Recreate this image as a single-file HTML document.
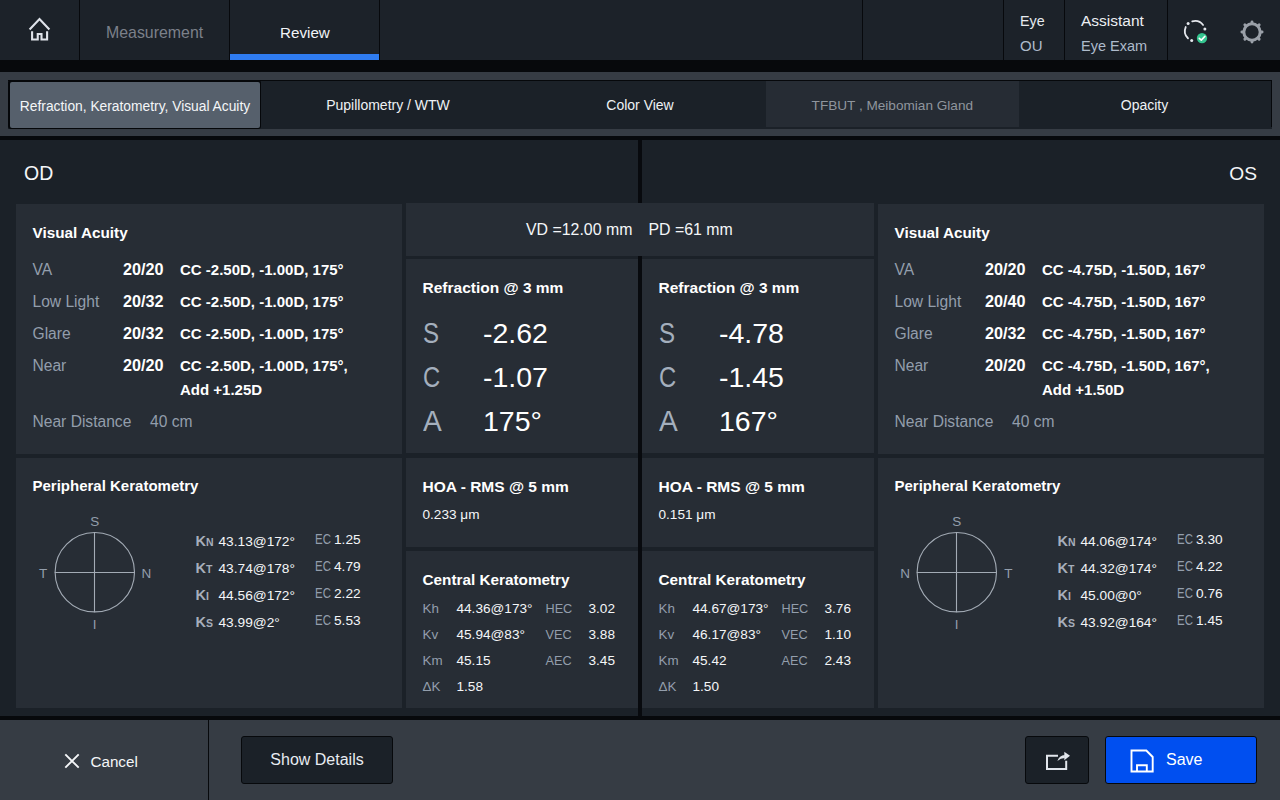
<!DOCTYPE html>
<html><head><meta charset="utf-8"><style>
html,body{margin:0;padding:0;width:1280px;height:800px;overflow:hidden;background:#1b2128;}
body>div{position:absolute;}
.t{position:absolute;white-space:nowrap;font-family:'Liberation Sans', sans-serif;}
</style></head><body>
<div style="left:0px;top:0px;width:1280px;height:60px;background:#1c2229;"></div>
<div style="left:79px;top:0px;width:1px;height:60px;background:#07090c;"></div>
<div style="left:229px;top:0px;width:1px;height:60px;background:#07090c;"></div>
<div style="left:379px;top:0px;width:1px;height:60px;background:#07090c;"></div>
<div style="left:862px;top:0px;width:1px;height:60px;background:#07090c;"></div>
<div style="left:1003px;top:0px;width:1px;height:60px;background:#07090c;"></div>
<div style="left:1064px;top:0px;width:1px;height:60px;background:#07090c;"></div>
<div style="left:1167px;top:0px;width:1px;height:60px;background:#07090c;"></div>
<div style="left:230px;top:54px;width:149px;height:6px;background:#2f7cf0;"></div>
<svg style="position:absolute;left:0;top:0" width="80" height="60" viewBox="0 0 80 60"><g fill="none" stroke="#dfe3ea" stroke-width="2.1" stroke-linejoin="miter" stroke-linecap="butt"><path d="M29.6 29.4 L39.5 19.1 L49.4 29.4"/><path d="M32.1 31.2 V39.55 H37.75 V34 H41.5 V39.55 H47.1 V31.2"/></g></svg>
<div class="t" style="left:106px;top:25.00px;font-size:15.9px;line-height:15.9px;color:#7b8089;font-weight:400;">Measurement</div>
<div class="t" style="left:280px;top:25.00px;font-size:15.2px;line-height:15.2px;color:#f2f4f7;font-weight:400;">Review</div>
<div class="t" style="left:1020px;top:14.00px;font-size:14.3px;line-height:14.3px;color:#e6eaef;font-weight:400;">Eye</div>
<div class="t" style="left:1020px;top:38.00px;font-size:15px;line-height:15px;color:#aebbcb;font-weight:400;">OU</div>
<div class="t" style="left:1081px;top:13.00px;font-size:15.5px;line-height:15.5px;color:#eceff3;font-weight:400;">Assistant</div>
<div class="t" style="left:1081px;top:39.00px;font-size:14.5px;line-height:14.5px;color:#aebbcb;font-weight:400;">Eye Exam</div>
<svg style="position:absolute;left:1170px;top:0" width="60" height="60" viewBox="1170 0 60 60"><g fill="none" stroke="#e4e7ec" stroke-width="1.8" stroke-linecap="round"><path d="M1192.22 21.29 A10.1 10.1 0 0 1 1203.07 24.92"/><path d="M1187.98 38.27 A10.1 10.1 0 0 1 1185.70 27.05"/></g><circle cx="1188.11" cy="23.61" r="1.5" fill="#e4e7ec"/><circle cx="1204.88" cy="28.90" r="1.5" fill="#e4e7ec"/><circle cx="1191.71" cy="40.55" r="1.5" fill="#e4e7ec"/><circle cx="1202" cy="38.1" r="5.2" fill="#34c58f"/><path d="M1199.3 38.3 L1201.3 40.1 L1204.9 36.4" fill="none" stroke="#ffffff" stroke-width="1.6" stroke-linecap="round" stroke-linejoin="round"/></svg>
<svg style="position:absolute;left:1220px;top:0" width="60" height="60" viewBox="1220 0 60 60"><circle cx="1252.0" cy="32.0" r="8.2" fill="none" stroke="#9aa0a8" stroke-width="3.0"/><path d="M1260.60 32.00 L1262.10 32.00 M1258.08 38.08 L1259.14 39.14 M1252.00 40.60 L1252.00 42.10 M1245.92 38.08 L1244.86 39.14 M1243.40 32.00 L1241.90 32.00 M1245.92 25.92 L1244.86 24.86 M1252.00 23.40 L1252.00 21.90 M1258.08 25.92 L1259.14 24.86" stroke="#9aa0a8" stroke-width="2.9" stroke-linecap="round"/></svg>
<div style="left:0px;top:60px;width:1280px;height:12px;background:#07090c;"></div>
<div style="left:0px;top:72px;width:1280px;height:64px;background:#363c44;"></div>
<div style="left:8px;top:80px;width:1264px;height:49px;background:#1b2128;"></div>
<div style="left:8px;top:80px;width:1264px;height:1px;background:#06080b;"></div>
<div style="left:1271px;top:80px;width:1px;height:47px;background:#06080b;"></div>
<div style="left:766px;top:81px;width:253px;height:46px;background:#262c34;"></div>
<div style="left:8px;top:80px;width:253px;height:49px;background:#05070a;border-radius:3px;"></div>
<div style="left:10px;top:82px;width:250px;height:46px;background:#56606c;border-radius:2px;"></div>
<div class="t" style="left:10.00px;top:100.00px;width:250px;text-align:center;font-size:13.8px;line-height:13.8px;color:#f4f6f8;font-weight:400;">Refraction, Keratometry, Visual Acuity</div>
<div class="t" style="left:263.00px;top:98.00px;width:250px;text-align:center;font-size:14px;line-height:14px;color:#eef1f4;font-weight:400;">Pupillometry / WTW</div>
<div class="t" style="left:515.00px;top:98.00px;width:250px;text-align:center;font-size:14px;line-height:14px;color:#eef1f4;font-weight:400;">Color View</div>
<div class="t" style="left:767.30px;top:99.00px;width:250px;text-align:center;font-size:13.6px;line-height:13.6px;color:#8f959d;font-weight:400;">TFBUT , Meibomian Gland</div>
<div class="t" style="left:1019.50px;top:98.00px;width:250px;text-align:center;font-size:14px;line-height:14px;color:#eef1f4;font-weight:400;">Opacity</div>
<div style="left:0px;top:136px;width:1280px;height:4px;background:#07090c;"></div>
<div style="left:0px;top:140px;width:1280px;height:576px;background:#1b2128;"></div>
<div style="left:638px;top:140px;width:4px;height:576px;background:#080a0e;"></div>
<div class="t" style="left:24px;top:164.00px;font-size:19.5px;line-height:19.5px;color:#f4f6f8;font-weight:400;">OD</div>
<div class="t" style="left:1157.00px;top:164.00px;width:100px;text-align:right;font-size:19.2px;line-height:19.2px;color:#f4f6f8;font-weight:400;">OS</div>
<div style="left:16px;top:204px;width:386px;height:250px;background:#272d35;"></div>
<div class="t" style="left:32.5px;top:225.00px;font-size:15.3px;line-height:15.3px;color:#ffffff;font-weight:700;">Visual Acuity</div>
<div class="t" style="left:32.5px;top:262.00px;font-size:15.6px;line-height:15.6px;color:#939eac;font-weight:400;">VA</div>
<div class="t" style="left:123px;top:261.00px;font-size:16.2px;line-height:16.2px;color:#ffffff;font-weight:700;">20/20</div>
<div class="t" style="left:180px;top:262.00px;font-size:15px;line-height:15px;color:#ffffff;font-weight:700;">CC -2.50D, -1.00D, 175°</div>
<div class="t" style="left:32.5px;top:294.00px;font-size:15.6px;line-height:15.6px;color:#939eac;font-weight:400;">Low Light</div>
<div class="t" style="left:123px;top:293.00px;font-size:16.2px;line-height:16.2px;color:#ffffff;font-weight:700;">20/32</div>
<div class="t" style="left:180px;top:294.00px;font-size:15px;line-height:15px;color:#ffffff;font-weight:700;">CC -2.50D, -1.00D, 175°</div>
<div class="t" style="left:32.5px;top:326.00px;font-size:15.6px;line-height:15.6px;color:#939eac;font-weight:400;">Glare</div>
<div class="t" style="left:123px;top:325.00px;font-size:16.2px;line-height:16.2px;color:#ffffff;font-weight:700;">20/32</div>
<div class="t" style="left:180px;top:326.00px;font-size:15px;line-height:15px;color:#ffffff;font-weight:700;">CC -2.50D, -1.00D, 175°</div>
<div class="t" style="left:32.5px;top:358.00px;font-size:15.6px;line-height:15.6px;color:#939eac;font-weight:400;">Near</div>
<div class="t" style="left:123px;top:357.00px;font-size:16.2px;line-height:16.2px;color:#ffffff;font-weight:700;">20/20</div>
<div class="t" style="left:180px;top:358.00px;font-size:15px;line-height:15px;color:#ffffff;font-weight:700;">CC -2.50D, -1.00D, 175°,</div>
<div class="t" style="left:180px;top:382.00px;font-size:15px;line-height:15px;color:#ffffff;font-weight:700;">Add +1.25D</div>
<div class="t" style="left:32.5px;top:414.00px;font-size:15.6px;line-height:15.6px;color:#939eac;font-weight:400;">Near Distance</div>
<div class="t" style="left:150px;top:414.00px;font-size:15.6px;line-height:15.6px;color:#939eac;font-weight:400;">40 cm</div>
<div style="left:878px;top:204px;width:386px;height:250px;background:#272d35;"></div>
<div class="t" style="left:894.5px;top:225.00px;font-size:15.3px;line-height:15.3px;color:#ffffff;font-weight:700;">Visual Acuity</div>
<div class="t" style="left:894.5px;top:262.00px;font-size:15.6px;line-height:15.6px;color:#939eac;font-weight:400;">VA</div>
<div class="t" style="left:985px;top:261.00px;font-size:16.2px;line-height:16.2px;color:#ffffff;font-weight:700;">20/20</div>
<div class="t" style="left:1042px;top:262.00px;font-size:15px;line-height:15px;color:#ffffff;font-weight:700;">CC -4.75D, -1.50D, 167°</div>
<div class="t" style="left:894.5px;top:294.00px;font-size:15.6px;line-height:15.6px;color:#939eac;font-weight:400;">Low Light</div>
<div class="t" style="left:985px;top:293.00px;font-size:16.2px;line-height:16.2px;color:#ffffff;font-weight:700;">20/40</div>
<div class="t" style="left:1042px;top:294.00px;font-size:15px;line-height:15px;color:#ffffff;font-weight:700;">CC -4.75D, -1.50D, 167°</div>
<div class="t" style="left:894.5px;top:326.00px;font-size:15.6px;line-height:15.6px;color:#939eac;font-weight:400;">Glare</div>
<div class="t" style="left:985px;top:325.00px;font-size:16.2px;line-height:16.2px;color:#ffffff;font-weight:700;">20/32</div>
<div class="t" style="left:1042px;top:326.00px;font-size:15px;line-height:15px;color:#ffffff;font-weight:700;">CC -4.75D, -1.50D, 167°</div>
<div class="t" style="left:894.5px;top:358.00px;font-size:15.6px;line-height:15.6px;color:#939eac;font-weight:400;">Near</div>
<div class="t" style="left:985px;top:357.00px;font-size:16.2px;line-height:16.2px;color:#ffffff;font-weight:700;">20/20</div>
<div class="t" style="left:1042px;top:358.00px;font-size:15px;line-height:15px;color:#ffffff;font-weight:700;">CC -4.75D, -1.50D, 167°,</div>
<div class="t" style="left:1042px;top:382.00px;font-size:15px;line-height:15px;color:#ffffff;font-weight:700;">Add +1.50D</div>
<div class="t" style="left:894.5px;top:414.00px;font-size:15.6px;line-height:15.6px;color:#939eac;font-weight:400;">Near Distance</div>
<div class="t" style="left:1012px;top:414.00px;font-size:15.6px;line-height:15.6px;color:#939eac;font-weight:400;">40 cm</div>
<div style="left:406px;top:203px;width:468px;height:53px;background:#272d35;"></div>
<div class="t" style="left:526px;top:222.00px;font-size:15.9px;line-height:15.9px;color:#f4f6f8;font-weight:400;">VD =12.00 mm</div>
<div class="t" style="left:648.5px;top:222.00px;font-size:15.9px;line-height:15.9px;color:#f4f6f8;font-weight:400;">PD =61 mm</div>
<div style="left:406px;top:259px;width:232px;height:194px;background:#272d35;"></div>
<div class="t" style="left:422.5px;top:280.00px;font-size:15.5px;line-height:15.5px;color:#ffffff;font-weight:700;">Refraction @ 3 mm</div>
<div class="t" style="left:423px;top:319.00px;font-size:29px;line-height:29px;color:#a4afbd;font-weight:400;transform:scaleX(0.83);transform-origin:0 0;">S</div>
<div class="t" style="left:483px;top:319.00px;font-size:28.5px;line-height:28.5px;color:#ffffff;font-weight:400;">-2.62</div>
<div class="t" style="left:423px;top:363.00px;font-size:29px;line-height:29px;color:#a4afbd;font-weight:400;transform:scaleX(0.82);transform-origin:0 0;">C</div>
<div class="t" style="left:483px;top:363.00px;font-size:28.5px;line-height:28.5px;color:#ffffff;font-weight:400;">-1.07</div>
<div class="t" style="left:423px;top:407.00px;font-size:29px;line-height:29px;color:#a4afbd;font-weight:400;transform:scaleX(0.97);transform-origin:0 0;">A</div>
<div class="t" style="left:483px;top:407.00px;font-size:28.5px;line-height:28.5px;color:#ffffff;font-weight:400;">175°</div>
<div style="left:642px;top:259px;width:232px;height:194px;background:#272d35;"></div>
<div class="t" style="left:658.5px;top:280.00px;font-size:15.5px;line-height:15.5px;color:#ffffff;font-weight:700;">Refraction @ 3 mm</div>
<div class="t" style="left:659px;top:319.00px;font-size:29px;line-height:29px;color:#a4afbd;font-weight:400;transform:scaleX(0.83);transform-origin:0 0;">S</div>
<div class="t" style="left:719px;top:319.00px;font-size:28.5px;line-height:28.5px;color:#ffffff;font-weight:400;">-4.78</div>
<div class="t" style="left:659px;top:363.00px;font-size:29px;line-height:29px;color:#a4afbd;font-weight:400;transform:scaleX(0.82);transform-origin:0 0;">C</div>
<div class="t" style="left:719px;top:363.00px;font-size:28.5px;line-height:28.5px;color:#ffffff;font-weight:400;">-1.45</div>
<div class="t" style="left:659px;top:407.00px;font-size:29px;line-height:29px;color:#a4afbd;font-weight:400;transform:scaleX(0.97);transform-origin:0 0;">A</div>
<div class="t" style="left:719px;top:407.00px;font-size:28.5px;line-height:28.5px;color:#ffffff;font-weight:400;">167°</div>
<div style="left:406px;top:458px;width:232px;height:89px;background:#272d35;"></div>
<div class="t" style="left:422.5px;top:479.00px;font-size:15.5px;line-height:15.5px;color:#ffffff;font-weight:700;">HOA - RMS @ 5 mm</div>
<div class="t" style="left:422.5px;top:508.00px;font-size:13.6px;line-height:13.6px;color:#f4f6f8;font-weight:400;">0.233 μm</div>
<div style="left:642px;top:458px;width:232px;height:89px;background:#272d35;"></div>
<div class="t" style="left:658.5px;top:479.00px;font-size:15.5px;line-height:15.5px;color:#ffffff;font-weight:700;">HOA - RMS @ 5 mm</div>
<div class="t" style="left:658.5px;top:508.00px;font-size:13.6px;line-height:13.6px;color:#f4f6f8;font-weight:400;">0.151 μm</div>
<div style="left:406px;top:551px;width:232px;height:157px;background:#272d35;"></div>
<div class="t" style="left:422.5px;top:572.00px;font-size:15.3px;line-height:15.3px;color:#ffffff;font-weight:700;">Central Keratometry</div>
<div class="t" style="left:422.5px;top:602.00px;font-size:13.4px;line-height:13.4px;color:#939eac;font-weight:400;">Kh</div>
<div class="t" style="left:456.5px;top:602.00px;font-size:13.6px;line-height:13.6px;color:#f4f6f8;font-weight:400;">44.36@173°</div>
<div class="t" style="left:545.5px;top:603.00px;font-size:12.7px;line-height:12.7px;color:#939eac;font-weight:400;">HEC</div>
<div class="t" style="left:588.5px;top:602.00px;font-size:13.6px;line-height:13.6px;color:#f4f6f8;font-weight:400;">3.02</div>
<div class="t" style="left:422.5px;top:628.00px;font-size:13.4px;line-height:13.4px;color:#939eac;font-weight:400;">Kv</div>
<div class="t" style="left:456.5px;top:628.00px;font-size:13.6px;line-height:13.6px;color:#f4f6f8;font-weight:400;">45.94@83°</div>
<div class="t" style="left:545.5px;top:629.00px;font-size:12.7px;line-height:12.7px;color:#939eac;font-weight:400;">VEC</div>
<div class="t" style="left:588.5px;top:628.00px;font-size:13.6px;line-height:13.6px;color:#f4f6f8;font-weight:400;">3.88</div>
<div class="t" style="left:422.5px;top:654.00px;font-size:13.4px;line-height:13.4px;color:#939eac;font-weight:400;">Km</div>
<div class="t" style="left:456.5px;top:654.00px;font-size:13.6px;line-height:13.6px;color:#f4f6f8;font-weight:400;">45.15</div>
<div class="t" style="left:545.5px;top:655.00px;font-size:12.7px;line-height:12.7px;color:#939eac;font-weight:400;">AEC</div>
<div class="t" style="left:588.5px;top:654.00px;font-size:13.6px;line-height:13.6px;color:#f4f6f8;font-weight:400;">3.45</div>
<div class="t" style="left:422.5px;top:680.00px;font-size:13.4px;line-height:13.4px;color:#939eac;font-weight:400;">ΔK</div>
<div class="t" style="left:456.5px;top:680.00px;font-size:13.6px;line-height:13.6px;color:#f4f6f8;font-weight:400;">1.58</div>
<div style="left:642px;top:551px;width:232px;height:157px;background:#272d35;"></div>
<div class="t" style="left:658.5px;top:572.00px;font-size:15.3px;line-height:15.3px;color:#ffffff;font-weight:700;">Central Keratometry</div>
<div class="t" style="left:658.5px;top:602.00px;font-size:13.4px;line-height:13.4px;color:#939eac;font-weight:400;">Kh</div>
<div class="t" style="left:692.5px;top:602.00px;font-size:13.6px;line-height:13.6px;color:#f4f6f8;font-weight:400;">44.67@173°</div>
<div class="t" style="left:781.5px;top:603.00px;font-size:12.7px;line-height:12.7px;color:#939eac;font-weight:400;">HEC</div>
<div class="t" style="left:824.5px;top:602.00px;font-size:13.6px;line-height:13.6px;color:#f4f6f8;font-weight:400;">3.76</div>
<div class="t" style="left:658.5px;top:628.00px;font-size:13.4px;line-height:13.4px;color:#939eac;font-weight:400;">Kv</div>
<div class="t" style="left:692.5px;top:628.00px;font-size:13.6px;line-height:13.6px;color:#f4f6f8;font-weight:400;">46.17@83°</div>
<div class="t" style="left:781.5px;top:629.00px;font-size:12.7px;line-height:12.7px;color:#939eac;font-weight:400;">VEC</div>
<div class="t" style="left:824.5px;top:628.00px;font-size:13.6px;line-height:13.6px;color:#f4f6f8;font-weight:400;">1.10</div>
<div class="t" style="left:658.5px;top:654.00px;font-size:13.4px;line-height:13.4px;color:#939eac;font-weight:400;">Km</div>
<div class="t" style="left:692.5px;top:654.00px;font-size:13.6px;line-height:13.6px;color:#f4f6f8;font-weight:400;">45.42</div>
<div class="t" style="left:781.5px;top:655.00px;font-size:12.7px;line-height:12.7px;color:#939eac;font-weight:400;">AEC</div>
<div class="t" style="left:824.5px;top:654.00px;font-size:13.6px;line-height:13.6px;color:#f4f6f8;font-weight:400;">2.43</div>
<div class="t" style="left:658.5px;top:680.00px;font-size:13.4px;line-height:13.4px;color:#939eac;font-weight:400;">ΔK</div>
<div class="t" style="left:692.5px;top:680.00px;font-size:13.6px;line-height:13.6px;color:#f4f6f8;font-weight:400;">1.50</div>
<div style="left:16px;top:458px;width:386px;height:250px;background:#272d35;"></div>
<div class="t" style="left:32.5px;top:478.00px;font-size:15px;line-height:15px;color:#ffffff;font-weight:700;">Peripheral Keratometry</div>
<svg style="position:absolute;left:16px;top:458px" width="200" height="250" viewBox="16 458 200 250"><g fill="none" stroke="#a3abb5" stroke-width="1.1"><circle cx="94.8" cy="572.2" r="39.7"/><path d="M54.8 572.5 H134.2 M94.5 532.8 V612.2"/></g></svg>
<div class="t" style="left:74.70px;top:515.00px;width:40px;text-align:center;font-size:13.5px;line-height:13.5px;color:#939eac;font-weight:400;">S</div>
<div class="t" style="left:74.70px;top:618.00px;width:40px;text-align:center;font-size:13.5px;line-height:13.5px;color:#939eac;font-weight:400;">I</div>
<div class="t" style="left:23.10px;top:567.00px;width:40px;text-align:center;font-size:13.5px;line-height:13.5px;color:#939eac;font-weight:400;">T</div>
<div class="t" style="left:126.30px;top:567.00px;width:40px;text-align:center;font-size:13.5px;line-height:13.5px;color:#939eac;font-weight:400;">N</div>
<div class="t" style="left:195.5px;top:534.00px;font-size:14.5px;line-height:14.5px;color:#a6aebb;font-weight:700;">K<span style="font-size:10.5px">N</span></div>
<div class="t" style="left:218.5px;top:535.00px;font-size:13.7px;line-height:13.7px;color:#f4f6f8;font-weight:400;">43.13@172°</div>
<div class="t" style="left:314.5px;top:532.00px;font-size:14.3px;line-height:14.3px;color:#939eac;font-weight:400;transform:scaleX(0.8);transform-origin:0 0;">EC</div>
<div class="t" style="left:334px;top:533.00px;font-size:13.7px;line-height:13.7px;color:#f4f6f8;font-weight:400;">1.25</div>
<div class="t" style="left:195.5px;top:561.00px;font-size:14.5px;line-height:14.5px;color:#a6aebb;font-weight:700;">K<span style="font-size:10.5px">T</span></div>
<div class="t" style="left:218.5px;top:562.00px;font-size:13.7px;line-height:13.7px;color:#f4f6f8;font-weight:400;">43.74@178°</div>
<div class="t" style="left:314.5px;top:559.00px;font-size:14.3px;line-height:14.3px;color:#939eac;font-weight:400;transform:scaleX(0.8);transform-origin:0 0;">EC</div>
<div class="t" style="left:334px;top:560.00px;font-size:13.7px;line-height:13.7px;color:#f4f6f8;font-weight:400;">4.79</div>
<div class="t" style="left:195.5px;top:588.00px;font-size:14.5px;line-height:14.5px;color:#a6aebb;font-weight:700;">K<span style="font-size:10.5px">I</span></div>
<div class="t" style="left:218.5px;top:589.00px;font-size:13.7px;line-height:13.7px;color:#f4f6f8;font-weight:400;">44.56@172°</div>
<div class="t" style="left:314.5px;top:586.00px;font-size:14.3px;line-height:14.3px;color:#939eac;font-weight:400;transform:scaleX(0.8);transform-origin:0 0;">EC</div>
<div class="t" style="left:334px;top:587.00px;font-size:13.7px;line-height:13.7px;color:#f4f6f8;font-weight:400;">2.22</div>
<div class="t" style="left:195.5px;top:615.00px;font-size:14.5px;line-height:14.5px;color:#a6aebb;font-weight:700;">K<span style="font-size:10.5px">S</span></div>
<div class="t" style="left:218.5px;top:616.00px;font-size:13.7px;line-height:13.7px;color:#f4f6f8;font-weight:400;">43.99@2°</div>
<div class="t" style="left:314.5px;top:613.00px;font-size:14.3px;line-height:14.3px;color:#939eac;font-weight:400;transform:scaleX(0.8);transform-origin:0 0;">EC</div>
<div class="t" style="left:334px;top:614.00px;font-size:13.7px;line-height:13.7px;color:#f4f6f8;font-weight:400;">5.53</div>
<div style="left:878px;top:458px;width:386px;height:250px;background:#272d35;"></div>
<div class="t" style="left:894.5px;top:478.00px;font-size:15px;line-height:15px;color:#ffffff;font-weight:700;">Peripheral Keratometry</div>
<svg style="position:absolute;left:878px;top:458px" width="200" height="250" viewBox="878 458 200 250"><g fill="none" stroke="#a3abb5" stroke-width="1.1"><circle cx="956.8" cy="572.2" r="39.7"/><path d="M916.8 572.5 H996.2 M956.5 532.8 V612.2"/></g></svg>
<div class="t" style="left:936.70px;top:515.00px;width:40px;text-align:center;font-size:13.5px;line-height:13.5px;color:#939eac;font-weight:400;">S</div>
<div class="t" style="left:936.70px;top:618.00px;width:40px;text-align:center;font-size:13.5px;line-height:13.5px;color:#939eac;font-weight:400;">I</div>
<div class="t" style="left:885.10px;top:567.00px;width:40px;text-align:center;font-size:13.5px;line-height:13.5px;color:#939eac;font-weight:400;">N</div>
<div class="t" style="left:988.30px;top:567.00px;width:40px;text-align:center;font-size:13.5px;line-height:13.5px;color:#939eac;font-weight:400;">T</div>
<div class="t" style="left:1057.5px;top:534.00px;font-size:14.5px;line-height:14.5px;color:#a6aebb;font-weight:700;">K<span style="font-size:10.5px">N</span></div>
<div class="t" style="left:1080.5px;top:535.00px;font-size:13.7px;line-height:13.7px;color:#f4f6f8;font-weight:400;">44.06@174°</div>
<div class="t" style="left:1176.5px;top:532.00px;font-size:14.3px;line-height:14.3px;color:#939eac;font-weight:400;transform:scaleX(0.8);transform-origin:0 0;">EC</div>
<div class="t" style="left:1196px;top:533.00px;font-size:13.7px;line-height:13.7px;color:#f4f6f8;font-weight:400;">3.30</div>
<div class="t" style="left:1057.5px;top:561.00px;font-size:14.5px;line-height:14.5px;color:#a6aebb;font-weight:700;">K<span style="font-size:10.5px">T</span></div>
<div class="t" style="left:1080.5px;top:562.00px;font-size:13.7px;line-height:13.7px;color:#f4f6f8;font-weight:400;">44.32@174°</div>
<div class="t" style="left:1176.5px;top:559.00px;font-size:14.3px;line-height:14.3px;color:#939eac;font-weight:400;transform:scaleX(0.8);transform-origin:0 0;">EC</div>
<div class="t" style="left:1196px;top:560.00px;font-size:13.7px;line-height:13.7px;color:#f4f6f8;font-weight:400;">4.22</div>
<div class="t" style="left:1057.5px;top:588.00px;font-size:14.5px;line-height:14.5px;color:#a6aebb;font-weight:700;">K<span style="font-size:10.5px">I</span></div>
<div class="t" style="left:1080.5px;top:589.00px;font-size:13.7px;line-height:13.7px;color:#f4f6f8;font-weight:400;">45.00@0°</div>
<div class="t" style="left:1176.5px;top:586.00px;font-size:14.3px;line-height:14.3px;color:#939eac;font-weight:400;transform:scaleX(0.8);transform-origin:0 0;">EC</div>
<div class="t" style="left:1196px;top:587.00px;font-size:13.7px;line-height:13.7px;color:#f4f6f8;font-weight:400;">0.76</div>
<div class="t" style="left:1057.5px;top:615.00px;font-size:14.5px;line-height:14.5px;color:#a6aebb;font-weight:700;">K<span style="font-size:10.5px">S</span></div>
<div class="t" style="left:1080.5px;top:616.00px;font-size:13.7px;line-height:13.7px;color:#f4f6f8;font-weight:400;">43.92@164°</div>
<div class="t" style="left:1176.5px;top:613.00px;font-size:14.3px;line-height:14.3px;color:#939eac;font-weight:400;transform:scaleX(0.8);transform-origin:0 0;">EC</div>
<div class="t" style="left:1196px;top:614.00px;font-size:13.7px;line-height:13.7px;color:#f4f6f8;font-weight:400;">1.45</div>
<div style="left:0px;top:716px;width:1280px;height:4px;background:#07090c;"></div>
<div style="left:0px;top:720px;width:1280px;height:80px;background:#363c44;"></div>
<div style="left:208px;top:720px;width:1px;height:80px;background:#07090c;"></div>
<svg style="position:absolute;left:60px;top:748px" width="26" height="26" viewBox="60 748 26 26"><path d="M65.3 754.3 L78.7 767.7 M78.7 754.3 L65.3 767.7" stroke="#f4f6f8" stroke-width="1.9"/></svg>
<div class="t" style="left:90.5px;top:754.00px;font-size:15.2px;line-height:15.2px;color:#f4f6f8;font-weight:400;">Cancel</div>
<div style="left:241px;top:736px;width:152px;height:48px;background:#1b2128;border:1px solid #07090c;box-sizing:border-box;border-radius:3px;"></div>
<div class="t" style="left:241.00px;top:752.00px;width:152px;text-align:center;font-size:16px;line-height:16px;color:#e8ecf2;font-weight:400;">Show Details</div>
<div style="left:1025px;top:736px;width:64px;height:48px;background:#1b2128;border:1px solid #07090c;box-sizing:border-box;border-radius:3px;"></div>
<svg style="position:absolute;left:1040px;top:745px" width="36" height="30" viewBox="1040 745 36 30"><path d="M1058 755.7 H1047 V769 H1066.2 V760.8" fill="none" stroke="#e2e6ec" stroke-width="2"/><path d="M1057.4 760.9 Q1059.2 755.6 1064.8 755.0 L1064.8 757.9 Q1060.6 757.9 1057.4 760.9 Z" fill="#e2e6ec"/><path d="M1064.3 751.8 L1070 755.8 L1064.3 760.2 Z" fill="#e2e6ec"/></svg>
<div style="left:1105px;top:736px;width:152px;height:48px;background:#004ff0;border:1px solid #07090c;box-sizing:border-box;border-radius:3px;"></div>
<svg style="position:absolute;left:1125px;top:745px" width="36" height="32" viewBox="1125 745 36 32"><path d="M1131.5 750.5 H1146.3 L1152.7 757 V771.5 H1131.5 Z" fill="none" stroke="#ffffff" stroke-width="1.9"/><path d="M1137 771.5 V765.2 H1146.8 V771.5" fill="none" stroke="#ffffff" stroke-width="1.9"/></svg>
<div class="t" style="left:1166px;top:752.00px;font-size:16px;line-height:16px;color:#ffffff;font-weight:400;">Save</div>
</body></html>
